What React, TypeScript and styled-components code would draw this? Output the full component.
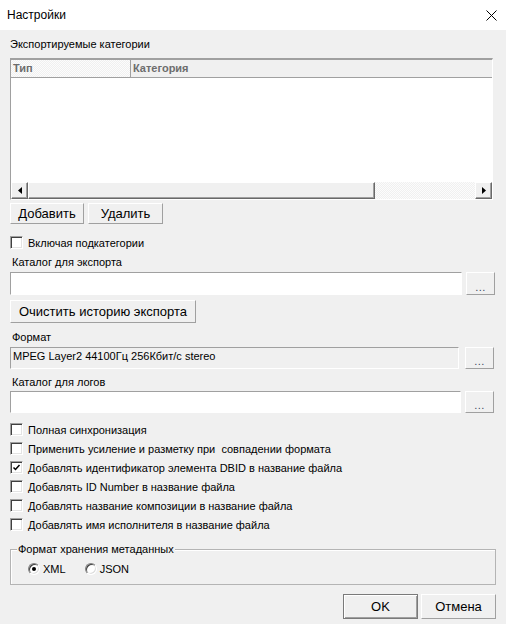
import React from 'react';
import styled, { createGlobalStyle, css } from 'styled-components';

const GlobalStyle = createGlobalStyle`
  html, body {
    margin: 0;
    padding: 0;
    background: #f0f0f0;
  }
  body {
    font-family: "Liberation Sans", Arial, sans-serif;
    font-size: 11px;
    color: #000;
  }
  * {
    box-sizing: border-box;
  }
`;

const sunken = css`
  border: 1px solid;
  border-color: #a0a0a0 #fff #fff #a0a0a0;
`;

const raised = css`
  border: 1px solid;
  border-color: #fff #a0a0a0 #a0a0a0 #fff;
`;

const dither = css`
  background-color: #f4f4f4;
  background-image: repeating-conic-gradient(#fcfcfc 0 25%, #f0f0f0 0 50%);
  background-size: 2px 2px;
`;

const Window = styled.div`
  width: 506px;
  height: 624px;
  display: flex;
  flex-direction: column;
  background: #f0f0f0;
  overflow: hidden;
`;

const TitleBar = styled.div`
  height: 30px;
  flex: none;
  background: #fff;
  display: flex;
  align-items: center;
  justify-content: space-between;
  padding: 0 9px 0 7px;
`;

const Title = styled.span`
  font-size: 12px;
  color: #000;
`;

const Content = styled.div`
  display: flex;
  flex-direction: column;
  padding: 8px 10px 0 10px;
`;

const Label = styled.div<{ $mt?: number; $indent?: number }>`
  margin-top: ${(p) => p.$mt ?? 0}px;
  padding-left: ${(p) => p.$indent ?? 0}px;
  line-height: 13px;
  height: 13px;
  white-space: nowrap;
`;

/* list view */
const ListView = styled.div`
  width: 483px;
  height: 142px;
  margin-top: 7px;
  display: flex;
  flex-direction: column;
  background: #fff;
  border-top: 2px solid #a0a0a0;
  border-left: 1px solid #a0a0a0;
  border-right: 1px solid #fff;
  border-bottom: 1px solid #fff;
`;

const ListHeader = styled.div`
  height: 18px;
  flex: none;
  display: flex;
  border-bottom: 1px solid #a0a0a0;
  background: #f0f0f0;
`;

const HeaderCell = styled.div<{ $width?: number; $dither?: boolean }>`
  ${(p) => (p.$width ? `width: ${p.$width}px; flex: none;` : 'flex: 1;')}
  ${(p) => p.$dither && dither}
  padding-left: 2px;
  font-weight: bold;
  color: #6d6d6d;
  line-height: 17px;
  border-right: 1px solid #a0a0a0;
  &:last-child {
    border-right: none;
  }
`;

const ListBody = styled.div`
  flex: 1;
  background: #fff;
`;

const HScroll = styled.div`
  height: 17px;
  flex: none;
  display: flex;
`;

const ScrollArrow = styled.div`
  width: 17px;
  flex: none;
  ${raised};
  border-right-color: #696969;
  border-bottom-color: #696969;
  box-shadow: inset -1px -1px #a0a0a0;
  background: #f0f0f0;
  display: flex;
  align-items: center;
  justify-content: center;
`;

const ScrollThumb = styled.div<{ $width: number }>`
  width: ${(p) => p.$width}px;
  flex: none;
  ${raised};
  border-right-color: #696969;
  border-bottom-color: #696969;
  box-shadow: inset -1px -1px #a0a0a0;
  background: #f0f0f0;
`;

const ScrollTrack = styled.div`
  flex: 1;
  ${dither};
`;

/* buttons */
const Row = styled.div<{ $mt?: number; $gap?: number }>`
  display: flex;
  align-items: stretch;
  margin-top: ${(p) => p.$mt ?? 0}px;
  gap: ${(p) => p.$gap ?? 0}px;
`;

const PushButton = styled.button<{ $width: number; $height?: number; $default?: boolean }>`
  width: ${(p) => p.$width}px;
  height: ${(p) => p.$height ?? 21}px;
  padding: 0;
  margin: 0;
  background: #f0f0f0;
  ${raised};
  ${(p) =>
    p.$default &&
    css`
      border-color: #7a7a7a;
      box-shadow: inset 1px 1px #fff, inset -1px -1px #a0a0a0;
    `}
  font-family: "Liberation Sans", Arial, sans-serif;
  font-size: 13px;
  color: #000;
  line-height: 1;
`;

const DotsButton = styled.button<{ $height: number }>`
  width: 29px;
  height: ${(p) => p.$height}px;
  flex: none;
  margin: 0;
  padding: 0 0 3px 0;
  background: #f0f0f0;
  ${raised};
  display: flex;
  align-items: flex-end;
  justify-content: center;
  font-family: "Liberation Sans", Arial, sans-serif;
  font-size: 11px;
  letter-spacing: 0.5px;
  color: #3a4a60;
  line-height: 8px;
`;

/* edits */
const EditBox = styled.div<{ $width: number; $height: number; $readonly?: boolean }>`
  width: ${(p) => p.$width}px;
  height: ${(p) => p.$height}px;
  flex: none;
  ${sunken};
  background: ${(p) => (p.$readonly ? '#f0f0f0' : '#fff')};
  padding: 2px 0 0 2px;
  line-height: 13px;
  white-space: nowrap;
  overflow: hidden;
`;

/* checkboxes */
const CheckList = styled.div`
  margin-top: 7px;
  display: flex;
  flex-direction: column;
`;

const CheckRow = styled.label<{ $height?: number; $mt?: number }>`
  display: flex;
  align-items: center;
  height: ${(p) => p.$height ?? 19}px;
  margin-top: ${(p) => p.$mt ?? 0}px;
  white-space: pre;
`;

const CheckBox = styled.span`
  width: 13px;
  height: 13px;
  flex: none;
  margin-right: 5px;
  background: #fff;
  ${sunken};
  box-shadow: inset 1px 1px #404040, inset -1px -1px #e3e3e3;
  display: flex;
  align-items: center;
  justify-content: center;
`;

/* group box */
const GroupBox = styled.div`
  position: relative;
  margin-top: 15px;
  width: 486px;
  height: 36px;
  border: 1px solid #b4b4b4;
  box-shadow: inset 1px 1px #fff;
  display: flex;
  align-items: center;
  padding: 4px 0 0 17px;
  gap: 19px;
`;

const GroupTitle = styled.span`
  position: absolute;
  top: -7px;
  left: 6px;
  padding: 0 1px;
  background: #f0f0f0;
  line-height: 13px;
`;

const RadioOption = styled.label`
  display: flex;
  align-items: center;
  gap: 3px;
`;

const RadioCircle = styled.span`
  width: 12px;
  height: 12px;
  flex: none;
  border-radius: 50%;
  background: #fff;
  border: 1px solid;
  border-color: #808080 #fff #fff #808080;
  box-shadow: inset 1px 1px #404040, inset -1px -1px #dcdcdc;
  display: flex;
  align-items: center;
  justify-content: center;
`;

const RadioDot = styled.span`
  width: 4px;
  height: 4px;
  border-radius: 50%;
  background: #000;
`;

const Footer = styled.div`
  display: flex;
  justify-content: flex-end;
  gap: 3px;
  margin-top: 9px;
`;

const CheckMark = () => (
  <svg width="9" height="9" viewBox="0 0 9 9">
    <path d="M1.5 4.5 L3.5 6.5 L7.5 2" fill="none" stroke="#000" strokeWidth="1.5" />
  </svg>
);

const Check = ({ label, checked, height, mt }: { label: string; checked?: boolean; height?: number; mt?: number }) => (
  <CheckRow $height={height} $mt={mt}>
    <CheckBox>{checked && <CheckMark />}</CheckBox>
    {label}
  </CheckRow>
);

const Radio = ({ label, checked }: { label: string; checked?: boolean }) => (
  <RadioOption>
    <RadioCircle>{checked && <RadioDot />}</RadioCircle>
    {label}
  </RadioOption>
);

const options = [
  { label: 'Полная синхронизация', checked: false },
  { label: 'Применить усиление и разметку при  совпадении формата', checked: false },
  { label: 'Добавлять идентификатор элемента DBID в название файла', checked: true },
  { label: 'Добавлять ID Number в название файла', checked: false },
  { label: 'Добавлять название композиции в название файла', checked: false },
  { label: 'Добавлять имя исполнителя в название файла', checked: false },
];

export default function App() {
  return (
    <Window>
      <GlobalStyle />
      <TitleBar>
        <Title>Настройки</Title>
        <svg width="11" height="11" viewBox="0 0 11 11">
          <path d="M0.5 0.5 L10.5 10.5 M10.5 0.5 L0.5 10.5" stroke="#000" strokeWidth="1" />
        </svg>
      </TitleBar>

      <Content>
        <Label>Экспортируемые категории</Label>
        <ListView>
          <ListHeader>
            <HeaderCell $width={120} $dither>Тип</HeaderCell>
            <HeaderCell>Категория</HeaderCell>
          </ListHeader>
          <ListBody />
          <HScroll>
            <ScrollArrow>
              <svg width="4" height="7" viewBox="0 0 4 7">
                <path d="M4 0 L0 3.5 L4 7 Z" fill="#000" />
              </svg>
            </ScrollArrow>
            <ScrollThumb $width={347} />
            <ScrollTrack />
            <ScrollArrow>
              <svg width="4" height="7" viewBox="0 0 4 7">
                <path d="M0 0 L4 3.5 L0 7 Z" fill="#000" />
              </svg>
            </ScrollArrow>
          </HScroll>
        </ListView>

        <Row $mt={3} $gap={4}>
          <PushButton $width={74}>Добавить</PushButton>
          <PushButton $width={75}>Удалить</PushButton>
        </Row>

        <Check label="Включая подкатегории" height={13} mt={12} />

        <Label $mt={7} $indent={2}>Каталог для экспорта</Label>
        <Row $mt={3} $gap={4}>
          <EditBox $width={452} $height={23} />
          <DotsButton $height={23}>...</DotsButton>
        </Row>

        <Row $mt={5}>
          <PushButton $width={186} $height={23}>Очистить историю экспорта</PushButton>
        </Row>

        <Label $mt={8} $indent={2}>Формат</Label>
        <Row $mt={3} $gap={6}>
          <EditBox $width={449} $height={22} $readonly>
            MPEG Layer2 44100Гц 256Кбит/с stereo
          </EditBox>
          <DotsButton $height={22}>...</DotsButton>
        </Row>

        <Label $mt={7} $indent={2}>Каталог для логов</Label>
        <Row $mt={2} $gap={4}>
          <EditBox $width={451} $height={22} />
          <DotsButton $height={22}>...</DotsButton>
        </Row>

        <CheckList>
          {options.map((o) => (
            <Check key={o.label} label={o.label} checked={o.checked} />
          ))}
        </CheckList>

        <GroupBox>
          <GroupTitle>Формат хранения метаданных</GroupTitle>
          <Radio label="XML" checked />
          <Radio label="JSON" />
        </GroupBox>

        <Footer>
          <PushButton $width={75} $height={25} $default>OK</PushButton>
          <PushButton $width={75} $height={25}>Отмена</PushButton>
        </Footer>
      </Content>
    </Window>
  );
}
